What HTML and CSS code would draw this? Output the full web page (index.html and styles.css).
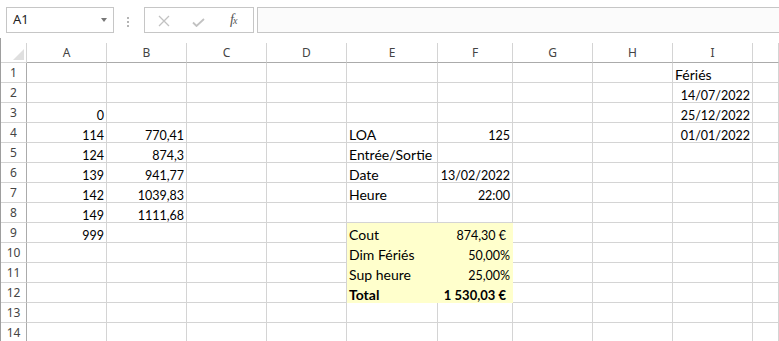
FILE: index.html
```html
<!DOCTYPE html>
<html lang="fr">
  <head>
    <meta charset="UTF-8" />
    <title>Classeur</title>
    <link rel="stylesheet" href="styles.css">
  </head>
  <body>
    <div class="bar">
      <div class="namebox">
        <span>A1</span>
        <i class="arrow"></i>
      </div>
      <div class="dots"><i></i><i></i><i></i></div>
      <div class="fxbox">
        <svg class="ico" width="12" height="12" viewBox="0 0 12 12">
          <path d="M1 1L11 11M11 1L1 11" stroke="#c2c2c2" stroke-width="1.3" fill="none"/>
        </svg>
        <svg class="ico" width="13" height="9" viewBox="0 0 13 9">
          <path d="M1 4.5L4.5 8L12 1" stroke="#c2c2c2" stroke-width="1.8" fill="none"/>
        </svg>
        <span class="fx">f<sub>x</sub></span>
      </div>
      <div class="formula"></div>
    </div>

    <div class="sheet">
      <div class="row head">
        <div class="corner"><i></i></div>
        <div class="ch">A</div><div class="ch">B</div><div class="ch">C</div><div class="ch">D</div>
        <div class="ch">E</div><div class="ch">F</div><div class="ch">G</div><div class="ch">H</div>
        <div class="ch">I</div><div class="ch"></div>
      </div>
      <div class="row">
        <div class="rh">1</div>
        <div class="c"></div><div class="c"></div><div class="c"></div><div class="c"></div>
        <div class="c"></div><div class="c"></div><div class="c"></div><div class="c"></div>
        <div class="c">Fériés</div><div class="c"></div>
      </div>
      <div class="row">
        <div class="rh">2</div>
        <div class="c"></div><div class="c"></div><div class="c"></div><div class="c"></div>
        <div class="c"></div><div class="c"></div><div class="c"></div><div class="c"></div>
        <div class="c num">14/07/2022</div><div class="c"></div>
      </div>
      <div class="row">
        <div class="rh">3</div>
        <div class="c num">0</div><div class="c"></div><div class="c"></div><div class="c"></div>
        <div class="c"></div><div class="c"></div><div class="c"></div><div class="c"></div>
        <div class="c num">25/12/2022</div><div class="c"></div>
      </div>
      <div class="row">
        <div class="rh">4</div>
        <div class="c num">114</div><div class="c num">770,41</div><div class="c"></div><div class="c"></div>
        <div class="c">LOA</div><div class="c num">125</div><div class="c"></div><div class="c"></div>
        <div class="c num">01/01/2022</div><div class="c"></div>
      </div>
      <div class="row">
        <div class="rh">5</div>
        <div class="c num">124</div><div class="c num">874,3</div><div class="c"></div><div class="c"></div>
        <div class="c">Entrée/Sortie</div><div class="c"></div><div class="c"></div><div class="c"></div>
        <div class="c"></div><div class="c"></div>
      </div>
      <div class="row">
        <div class="rh">6</div>
        <div class="c num">139</div><div class="c num">941,77</div><div class="c"></div><div class="c"></div>
        <div class="c">Date</div><div class="c num">13/02/2022</div><div class="c"></div><div class="c"></div>
        <div class="c"></div><div class="c"></div>
      </div>
      <div class="row">
        <div class="rh">7</div>
        <div class="c num">142</div><div class="c num">1039,83</div><div class="c"></div><div class="c"></div>
        <div class="c">Heure</div><div class="c num">22:00</div><div class="c"></div><div class="c"></div>
        <div class="c"></div><div class="c"></div>
      </div>
      <div class="row">
        <div class="rh">8</div>
        <div class="c num">149</div><div class="c num">1111,68</div><div class="c"></div><div class="c"></div>
        <div class="c"></div><div class="c"></div><div class="c"></div><div class="c"></div>
        <div class="c"></div><div class="c"></div>
      </div>
      <div class="row">
        <div class="rh">9</div>
        <div class="c num">999</div><div class="c"></div><div class="c"></div><div class="c"></div>
        <div class="c fill">Cout</div><div class="c fill num euro">874,30 €</div><div class="c"></div><div class="c"></div>
        <div class="c"></div><div class="c"></div>
      </div>
      <div class="row">
        <div class="rh">10</div>
        <div class="c"></div><div class="c"></div><div class="c"></div><div class="c"></div>
        <div class="c fill">Dim Fériés</div><div class="c fill num">50,00%</div><div class="c"></div><div class="c"></div>
        <div class="c"></div><div class="c"></div>
      </div>
      <div class="row">
        <div class="rh">11</div>
        <div class="c"></div><div class="c"></div><div class="c"></div><div class="c"></div>
        <div class="c fill">Sup heure</div><div class="c fill num">25,00%</div><div class="c"></div><div class="c"></div>
        <div class="c"></div><div class="c"></div>
      </div>
      <div class="row">
        <div class="rh">12</div>
        <div class="c"></div><div class="c"></div><div class="c"></div><div class="c"></div>
        <div class="c fill bold">Total</div><div class="c fill num euro bold">1 530,03 €</div><div class="c"></div><div class="c"></div>
        <div class="c"></div><div class="c"></div>
      </div>
      <div class="row">
        <div class="rh">13</div>
        <div class="c"></div><div class="c"></div><div class="c"></div><div class="c"></div>
        <div class="c"></div><div class="c"></div><div class="c"></div><div class="c"></div>
        <div class="c"></div><div class="c"></div>
      </div>
      <div class="row">
        <div class="rh">14</div>
        <div class="c"></div><div class="c"></div><div class="c"></div><div class="c"></div>
        <div class="c"></div><div class="c"></div><div class="c"></div><div class="c"></div>
        <div class="c"></div><div class="c"></div>
      </div>
    </div>
  </body>
</html>
```

FILE: styles.css
```css
body {
  margin: 0;
  background: #fff;
  font-family: Lato, "Liberation Sans", sans-serif;
  overflow: hidden;
}

/* formula bar */
.bar {
  display: flex;
  align-items: flex-start;
  height: 38px;
  padding-top: 7px;
  box-sizing: border-box;
}
.namebox {
  display: flex;
  align-items: center;
  justify-content: space-between;
  box-sizing: border-box;
  width: 108px;
  height: 26px;
  margin-left: 6px;
  padding: 0 6px 2px 6px;
  border: 1px solid #c6c6c6;
  font-family: "Noto Sans", sans-serif;
  font-size: 13px;
  color: #222;
}
.arrow {
  width: 0;
  height: 0;
  border-left: 3.5px solid transparent;
  border-right: 3.5px solid transparent;
  border-top: 4px solid #777;
  margin-top: 1px;
}
.dots {
  display: flex;
  flex-direction: column;
  gap: 2px;
  margin: 10px 0 0 13px;
}
.dots i {
  width: 2px;
  height: 2px;
  background: #b5b5b5;
}
.fxbox {
  display: flex;
  align-items: center;
  box-sizing: border-box;
  width: 110px;
  height: 26px;
  margin-left: 15px;
  padding: 0 0 0 13px;
  border: 1px solid #c6c6c6;
}
.ico:first-child { margin-top: 2px; }
.ico + .ico { margin-left: 22px; margin-top: 4px; }
.fx {
  margin-left: 25px;
  font-family: "Liberation Serif", serif;
  font-style: italic;
  font-size: 14px;
  color: #555;
}
.fx sub {
  font-size: 10px;
  vertical-align: 0;
  margin-left: -1px;
}
.formula {
  flex: 1;
  height: 26px;
  margin-left: 3px;
  margin-right: -4px;
  box-sizing: border-box;
  border: 1px solid #c6c6c6;
  background: #fbfbfb;
}

/* sheet */
.sheet {
  border-left: 1px solid #9e9e9e;
  padding-top: 5px;
}
.row {
  display: grid;
  grid-template-columns: 26px 80px 80px 80px 80px 91px 75px 80px 80px 80px 1fr;
  height: 20px;
}
.row > div {
  box-sizing: border-box;
  height: 20px;
  border-right: 1px solid #d4d4d4;
  border-bottom: 1px solid #d4d4d4;
  white-space: nowrap;
}
.head > div {
  height: 20px;
  border-bottom: 1px solid #ababab;
}
.ch {
  text-align: center;
  font-family: "Noto Sans", sans-serif;
  font-size: 12px;
  line-height: 19px;
  color: #444;
}
.corner {
  position: relative;
  border-bottom-color: #d4d4d4 !important;
  border-right-color: #d4d4d4 !important;
}
.corner i {
  position: absolute;
  right: 2px;
  bottom: 2px;
  width: 0;
  height: 0;
  border-left: 11px solid transparent;
  border-bottom: 11px solid #dfdfdf;
}
.row > .rh {
  border-right-color: #ababab;
  text-align: center;
  font-family: "Noto Sans", sans-serif;
  font-size: 12px;
  line-height: 19px;
  color: #444;
}
.c {
  padding: 2px 2px 0 2px;
  font-size: 14px;
  line-height: 19px;
  color: #000;
}
.num {
  text-align: right;
  font-size: 12.5px;
  padding-top: 2.5px;
}
.euro { padding-right: 6px; }
.bold { font-weight: bold; font-size: 13px; }
.c.bold:not(.num) { font-size: 14px; }
.row > .fill {
  background: #ffffcc;
  border-color: #ffffcc;
}
```
